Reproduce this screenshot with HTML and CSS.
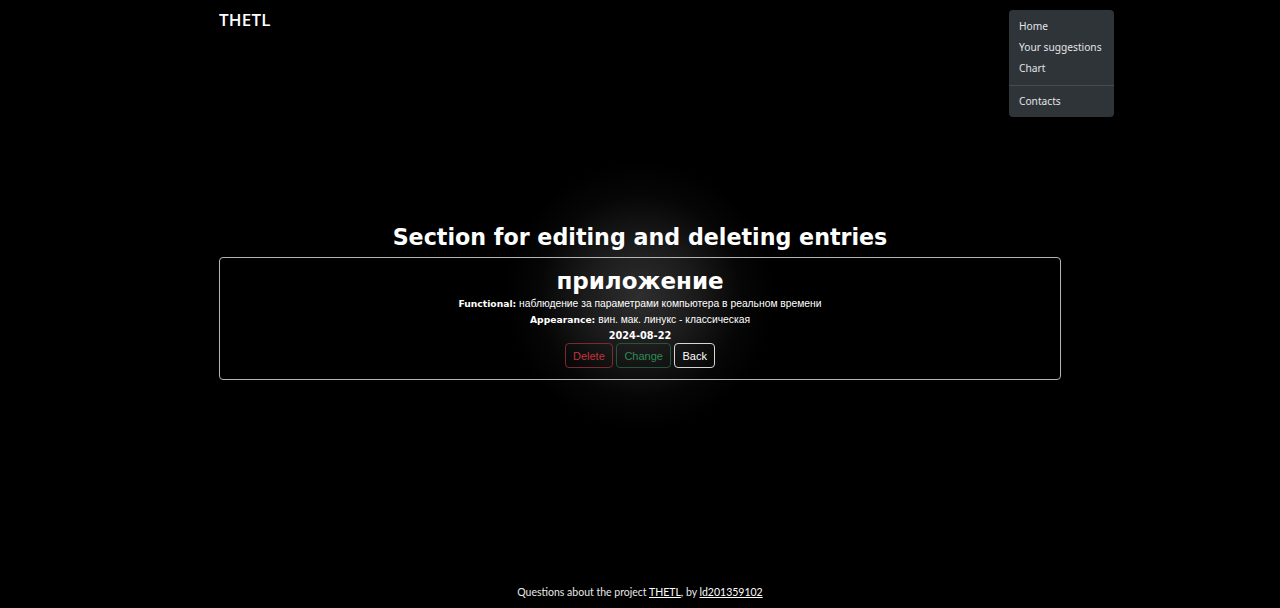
FILE: index.html
```html
<!DOCTYPE html>
<html lang="ru">
<head>
<meta charset="utf-8">
<title>THETL</title>
<link rel="stylesheet" href="styles.css">
</head>
<body>
<div class="page">
  <header class="navbar">
    <div class="container nav-inner">
      <a class="brand" href="#">THETL</a>
    </div>
    <ul class="dropdown">
      <li><a href="#">Home</a></li>
      <li><a href="#">Your suggestions</a></li>
      <li><a href="#">Chart</a></li>
      <li class="divider"></li>
      <li><a href="#">Contacts</a></li>
    </ul>
  </header>
  <main class="main">
    <div class="container content">
      <div class="glow"></div>
      <h1 class="heading">Section for editing and deleting entries</h1>
      <div class="card">
        <h2 class="entry-title">приложение</h2>
        <p class="line"><b>Functional:</b>&nbsp;наблюдение за параметрами компьютера в реальном времени</p>
        <p class="line"><b>Appearance:</b>&nbsp;вин. мак. линукс - классическая</p>
        <p class="line"><b class="date">2024-08-22</b></p>
        <div class="actions">
          <button class="btn btn-danger">Delete</button>
          <button class="btn btn-success">Change</button>
          <button class="btn btn-light">Back</button>
        </div>
      </div>
    </div>
  </main>
  <footer class="footer">
    Questions about the project <a href="#">THETL</a>, by <a href="#">ld201359102</a>
  </footer>
</div>
</body>
</html>
```
FILE: styles.css
```css
* { box-sizing: border-box; }
html, body { margin: 0; padding: 0; background: #000; }
body { color: #fff; font-family: "Open Sans", "Noto Sans", sans-serif; }
.page { min-height: 608px; display: flex; flex-direction: column; position: relative; }
.container { width: 842px; margin: 0 auto; }
.navbar { height: 40px; position: relative; }
.nav-inner { display: flex; align-items: center; height: 40px; padding-bottom: 1px; }
.brand { color: #fff; text-decoration: none; font-size: 17px; font-weight: 600; font-family: "Open Sans", sans-serif; letter-spacing: 0.2px; }
.dropdown {
  position: absolute; left: 1009px; top: 10px; width: 105px; margin: 0; padding: 6px 0 5px;
  list-style: none; background: #2f3439; border-radius: 4px;
  font-family: "Noto Sans", sans-serif; font-size: 10.2px; white-space: nowrap;
}
.dropdown a { display: block; color: #e3e5e8; text-decoration: none; padding: 3px 10px; line-height: 15px; }
.dropdown .divider { height: 1px; background: #454b51; margin: 6px 0 5px; }
.main { flex: 1; position: relative; padding-top: 181px; }
.content { position: relative; display: flex; flex-direction: column; align-items: stretch; }
.glow {
  position: absolute; left: 286px; top: -60px; width: 270px; height: 270px;
  background: radial-gradient(circle closest-side, rgba(46,46,46,1) 0%, rgba(32,32,32,0.85) 40%, rgba(12,12,12,0.5) 75%, rgba(0,0,0,0) 100%);
  pointer-events: none;
}
.heading {
  position: relative;
  margin: 0 0 4px; text-align: center; font-family: "DejaVu Sans", sans-serif; font-weight: 700;
  font-size: 22.2px; line-height: 32px; letter-spacing: 0; color: #fff;
}
.card {
  position: relative;
  border: 1px solid #b5b5b5; border-radius: 4px; padding: 8px 0 11px;
  display: flex; flex-direction: column; align-items: center;
}
.entry-title { margin: 0; font-family: "DejaVu Sans", sans-serif; font-weight: 700; font-size: 23px; line-height: 30px; height: 30px; }
.line { margin: 0; font-family: "Liberation Sans", Arial, sans-serif; font-size: 10.3px; line-height: 16px; height: 16px; color: #fff; display: flex; align-items: center; }
.line b { font-family: "DejaVu Sans", sans-serif; font-size: 9.2px; line-height: 16px; }
.line b.date { font-size: 9.8px; }
.actions { display: flex; gap: 3px; margin-top: -1px; }
.btn {
  font-family: "Liberation Sans", Arial, sans-serif; font-size: 11px; height: 25px; padding: 0 7.3px;
  background: transparent; border: 1px solid; border-radius: 4px; cursor: pointer;
}
.btn-danger { color: #c2333e; border-color: #7a2a31; }
.btn-success { color: #2e8a54; border-color: #25553a; }
.btn-light { color: #fff; border-color: #d6d6d6; }
.footer {
  text-align: center; font-family: Lato, sans-serif; font-size: 10.5px; color: #e8e8e8;
  padding: 0 0 10px; line-height: 12px;
}
.footer a { color: #fff; }
```
